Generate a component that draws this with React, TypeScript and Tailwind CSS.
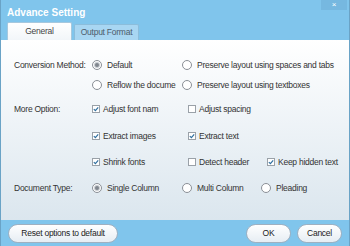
import React from 'react';

const font = { fontFamily: '"Liberation Sans", Arial, sans-serif' };

function Radio({ checked, label }: { checked?: boolean; label: string }) {
  return (
    <div className="flex items-center gap-[5px] whitespace-nowrap">
      <span className="w-[10px] h-[10px] rounded-full border border-[#8a8f96] bg-white flex items-center justify-center shrink-0">
        {checked && <span className="w-[4px] h-[4px] rounded-full bg-[#80868e] ring-1 ring-[#c9cdd2]" />}
      </span>
      <span>{label}</span>
    </div>
  );
}

function Check({ checked, label }: { checked?: boolean; label: string }) {
  return (
    <div className="flex items-center gap-[3px] whitespace-nowrap">
      <span className="w-[8px] h-[8px] border border-[#9aa1a8] bg-white flex items-center justify-center shrink-0">
        {checked && (
          <svg width="6" height="6" viewBox="0 0 6 6">
            <path d="M0.8 3.1 L2.4 4.6 L5.2 1.3" stroke="#2f6f9f" strokeWidth="1.2" fill="none" />
          </svg>
        )}
      </span>
      <span>{label}</span>
    </div>
  );
}

export default function App() {
  return (
    <div
      className="w-[350px] h-[246px] flex flex-col bg-[#80c5ec] border-x border-[#6aa3c6] overflow-hidden text-[8.5px] tracking-[-0.25px] text-[#333]"
      style={font}
    >
      {/* title bar */}
      <div className="h-[40px] flex flex-col shrink-0">
        <div className="flex items-start justify-between">
          <span className="text-white font-bold text-[10px] tracking-normal pl-[6px] pt-[5px]">Advance Setting</span>
          <span className="w-[26px] h-[10px] bg-[#76b8e0] text-white text-[8px] leading-[9px] text-center mr-[2px]">×</span>
        </div>
        <div className="flex items-end gap-[2px] pl-[6px] mt-auto">
          <div className="w-[65px] h-[18px] rounded-t-[2px] border border-b-0 border-[#a6c8de] bg-gradient-to-b from-white to-[#f2f6f9] flex items-center justify-center text-[#444]">
            General
          </div>
          <div className="w-[65px] h-[16px] rounded-t-[2px] border border-b-0 border-[#8cbddb] bg-[#a8d6f2] flex items-center justify-center text-[#4d5c6b]">
            Output Format
          </div>
        </div>
      </div>

      {/* content */}
      <div className="flex-1 bg-gradient-to-b from-white to-[#dbe6ee] flex flex-col">
        <div className="flex h-[20px] items-center mt-[15px]">
          <span className="w-[91px] pl-[13px] whitespace-nowrap">Conversion Method:</span>
          <div className="w-[90px]">
            <Radio checked label="Default" />
          </div>
          <Radio label="Preserve layout using spaces and tabs" />
        </div>
        <div className="flex h-[20px] items-center">
          <span className="w-[91px]" />
          <div className="w-[90px]">
            <Radio label="Reflow the docume" />
          </div>
          <Radio label="Preserve layout using textboxes" />
        </div>
        <div className="flex h-[20px] items-center mt-[4px]">
          <span className="w-[91px] pl-[13px] whitespace-nowrap">More Option:</span>
          <div className="w-[96px]">
            <Check checked label="Adjust font nam" />
          </div>
          <Check label="Adjust spacing" />
        </div>
        <div className="flex h-[20px] items-center mt-[7px]">
          <span className="w-[91px]" />
          <div className="w-[96px]">
            <Check checked label="Extract images" />
          </div>
          <Check checked label="Extract text" />
        </div>
        <div className="flex h-[20px] items-center mt-[6px]">
          <span className="w-[91px]" />
          <div className="w-[96px]">
            <Check checked label="Shrink fonts" />
          </div>
          <div className="w-[79px]">
            <Check label="Detect header" />
          </div>
          <Check checked label="Keep hidden text" />
        </div>
        <div className="flex h-[20px] items-center mt-[6px]">
          <span className="w-[91px] pl-[13px] whitespace-nowrap">Document Type:</span>
          <div className="w-[90px]">
            <Radio checked label="Single Column" />
          </div>
          <div className="w-[79px]">
            <Radio label="Multi Column" />
          </div>
          <Radio label="Pleading" />
        </div>
      </div>

      {/* footer */}
      <div className="h-[26px] shrink-0 flex items-center px-[7px] gap-[6px]">
        <button className="w-[110px] h-[19px] rounded-full border border-[#9fb0c0] bg-gradient-to-b from-white to-[#e6edf3] text-[#222]">
          Reset options to default
        </button>
        <div className="flex-1" />
        <button className="w-[45px] h-[19px] rounded-full border border-[#9fb0c0] bg-gradient-to-b from-white to-[#e6edf3] text-[#222]">
          OK
        </button>
        <button className="w-[45px] h-[19px] rounded-full border border-[#9fb0c0] bg-gradient-to-b from-white to-[#e6edf3] text-[#222]">
          Cancel
        </button>
      </div>
    </div>
  );
}
